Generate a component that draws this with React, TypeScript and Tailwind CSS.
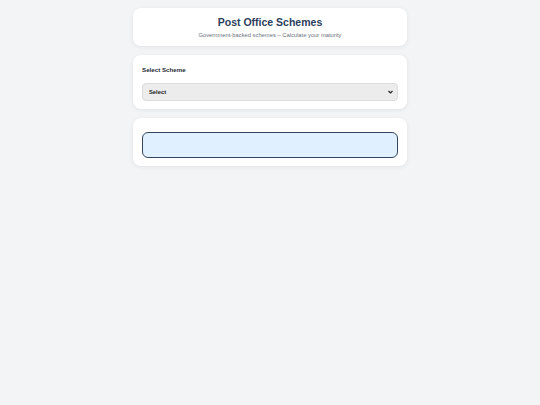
export default function App() {
  return (
    <div className="min-h-screen bg-[#f3f4f6] font-['Liberation_Sans',Arial,sans-serif]">
      <div className="mx-auto w-[274px] pt-[8px] flex flex-col gap-[9px]">
        <div className="bg-white rounded-[8px] shadow-[0_1px_4px_rgba(0,0,0,0.08)] h-[38px] flex flex-col items-center justify-center pt-[2px]">
          <h1 className="text-[10.5px] font-bold text-[#2c3e5c] leading-none">Post Office Schemes</h1>
          <p className="text-[5.8px] text-[#6b7280] leading-none mt-[5px]">Government-backed schemes – Calculate your maturity</p>
        </div>

        <div className="bg-white rounded-[8px] shadow-[0_1px_4px_rgba(0,0,0,0.08)] px-[9px] pt-[12px] pb-[8px]">
          <label className="block text-[6.2px] font-bold text-[#1f2937] leading-none">Select Scheme</label>
          <div className="mt-[10px] relative h-[18px] bg-[#ececec] border border-[#dcdcdc] rounded-[4px] flex items-center px-[6px]">
            <span className="text-[5.8px] font-bold text-[#222]">Select</span>
            <svg className="absolute right-[4px] top-1/2 -translate-y-1/2" width="5" height="4" viewBox="0 0 5 4">
              <path d="M0.5 1 L2.5 3 L4.5 1" stroke="#222" strokeWidth="1.2" fill="none" />
            </svg>
          </div>
        </div>

        <div className="bg-white rounded-[8px] shadow-[0_1px_4px_rgba(0,0,0,0.08)] px-[9px] pt-[14px] pb-[8px]">
          <div className="h-[26px] bg-[#e0f0ff] border-[1.5px] border-[#34465e] rounded-[6px]" />
        </div>
      </div>
    </div>
  )
}
